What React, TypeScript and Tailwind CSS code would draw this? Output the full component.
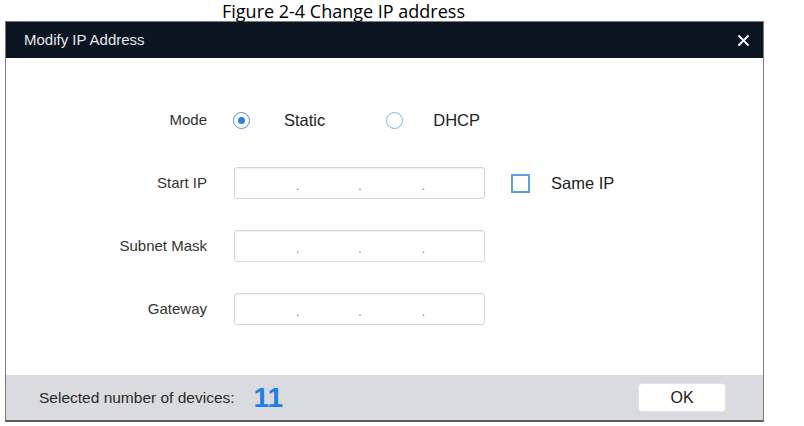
import React from "react";

const sans = { fontFamily: '"Liberation Sans", Arial, sans-serif' };

function IpBox() {
  return (
    <div className="flex h-[32px] w-[251px] items-end rounded-[3px] border border-[#d6d6d6] bg-white pb-[6px] shadow-[inset_0_1px_1px_rgba(0,0,0,0.06)]">
      <span className="ml-[61px] text-[12px] leading-none text-[#777]">.</span>
      <span className="ml-[59px] text-[12px] leading-none text-[#777]">.</span>
      <span className="ml-[60px] text-[12px] leading-none text-[#777]">.</span>
    </div>
  );
}

function Radio({ checked }: { checked?: boolean }) {
  return (
    <span
      className={`flex h-[17px] w-[17px] items-center justify-center rounded-full border-[1.5px] bg-white ${
        checked ? "border-[#4b8fd6]" : "border-[#86b3e0]"
      }`}
    >
      {checked ? <span className="h-[7px] w-[7px] rounded-full bg-[#2f7fdc]" /> : null}
    </span>
  );
}

function Row({ label, children }: { label: string; children: React.ReactNode }) {
  return (
    <div className="flex h-[32px] items-center">
      <div className="w-[201px] text-right text-[15px] text-[#333]">{label}</div>
      <div className="ml-[27px] flex items-center">{children}</div>
    </div>
  );
}

export default function App() {
  return (
    <div className="h-[426px] w-[804px] overflow-hidden bg-white" style={sans}>
      <div
        className="h-[21px] overflow-visible pl-[222px] text-[18px] leading-[22px] text-black"
        style={{ fontFamily: '"Open Sans", "Noto Sans", sans-serif' }}
      >
        Figure 2-4 Change IP address
      </div>
      <div className="ml-[5px] w-[759px] border-x border-t border-b-2 border-[#7c7c7c] border-b-[#5e5e5e]">
        <div className="flex h-[36px] items-center justify-between bg-[#0b1522] pl-[18px] pr-[14px]">
          <span className="text-[15px] text-[#e6e9ed]">Modify IP Address</span>
          <svg width="11" height="11" viewBox="0 0 11 11">
            <path d="M1 1L10 10M10 1L1 10" stroke="#f2f2f2" strokeWidth="2" strokeLinecap="round" />
          </svg>
        </div>
        <div className="flex h-[317px] flex-col gap-[31px] bg-white pt-[46px]">
          <Row label="Mode">
            <span className="ml-[-1px]">
              <Radio checked />
            </span>
            <span className="ml-[34px] text-[16.5px] text-[#222]">Static</span>
            <span className="ml-[61px]">
              <Radio />
            </span>
            <span className="ml-[30px] text-[16.5px] text-[#222]">DHCP</span>
          </Row>
          <Row label="Start IP">
            <IpBox />
            <span className="ml-[26px] h-[19px] w-[19px] border-2 border-[#5e9fdc] bg-white" />
            <span className="ml-[21px] text-[16.5px] text-[#222]">Same IP</span>
          </Row>
          <Row label="Subnet Mask">
            <IpBox />
          </Row>
          <Row label="Gateway">
            <IpBox />
          </Row>
        </div>
        <div className="flex h-[45px] items-center bg-[#d9dbe0] pl-[33px] pr-[37px]">
          <span className="text-[15.5px] text-[#2a2a2a]">Selected number of devices:</span>
          <span className="ml-[19px] text-[28px] font-bold leading-none text-[#1f7fe3]">11</span>
          <button
            type="button"
            className="ml-auto h-[29px] w-[88px] rounded-[4px] border border-[#e3e3e3] bg-white text-[16px] text-[#222]"
          >
            OK
          </button>
        </div>
      </div>
    </div>
  );
}
